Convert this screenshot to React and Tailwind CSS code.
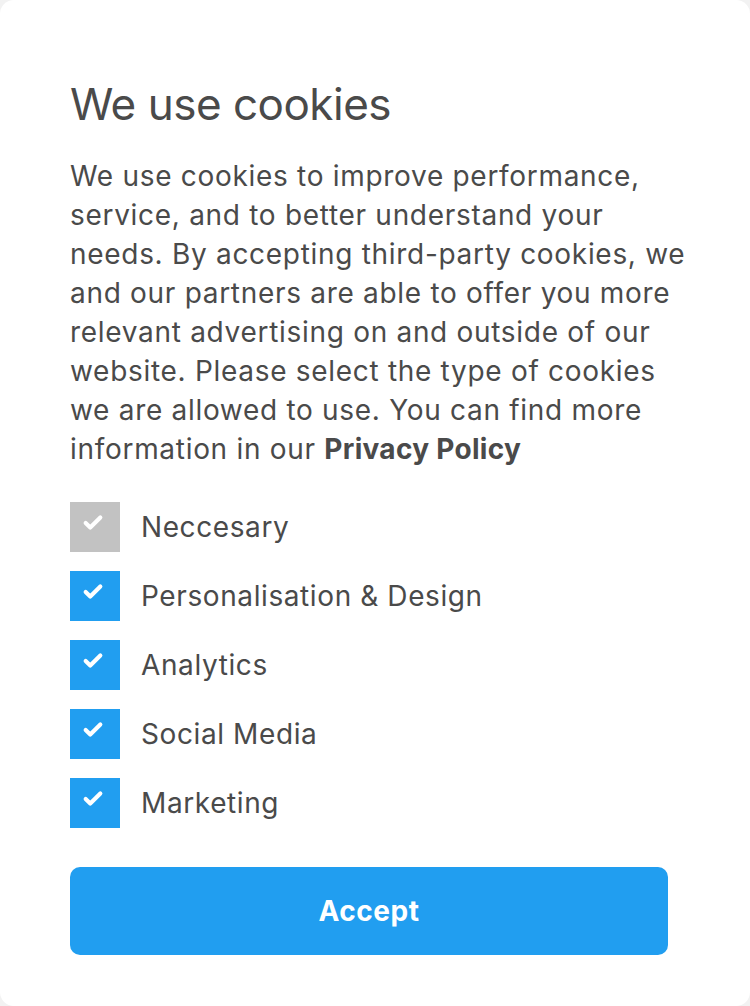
import { Check } from "lucide-react";

const options = [
  { label: "Neccesary", locked: true },
  { label: "Personalisation & Design" },
  { label: "Analytics" },
  { label: "Social Media" },
  { label: "Marketing" },
];

function Box({ locked }) {
  return (
    <div
      className={`w-[50px] h-[50px] flex items-center justify-center shrink-0 ${
        locked ? "bg-[#c2c2c2]" : "bg-[#219ef0]"
      }`}
    >
      <Check className="w-[22px] h-[22px] text-white -mt-2 -ml-1" strokeWidth={4.5} />
    </div>
  );
}

export default function App() {
  return (
    <div className="bg-[#f2f2f2] w-[750px] h-[1006px]">
      <div
        className="bg-white w-full h-full rounded-[14px] px-[70px] pt-[76px] text-[#4a4a4a]"
        style={{ fontFamily: "Inter, 'Liberation Sans', sans-serif" }}
      >
        <h1 className="text-[44px] leading-[56px] font-normal tracking-[-0.5px]">We use cookies</h1>
        <p className="mt-[25px] text-[28px] leading-[39px] tracking-[0.7px] w-[622px]">
          We use cookies to improve performance, service, and to better understand your needs. By
          accepting third-party cookies, we and our partners are able to offer you more relevant
          advertising on and outside of our website. Please select the type of cookies we are
          allowed to use. You can find more information in our{" "}
          <span className="font-bold tracking-[0.3px]">Privacy Policy</span>
        </p>
        <div className="mt-[33px] flex flex-col gap-[19px]">
          {options.map((o) => (
            <label key={o.label} className="flex items-center gap-[21px]">
              <Box locked={o.locked} />
              <span className="text-[28px] tracking-[0.6px]">{o.label}</span>
            </label>
          ))}
        </div>
        <button className="mt-[39px] w-[598px] h-[88px] rounded-[10px] bg-[#219ef0] text-white text-[28px] font-bold tracking-[0.5px]">
          Accept
        </button>
      </div>
    </div>
  );
}
